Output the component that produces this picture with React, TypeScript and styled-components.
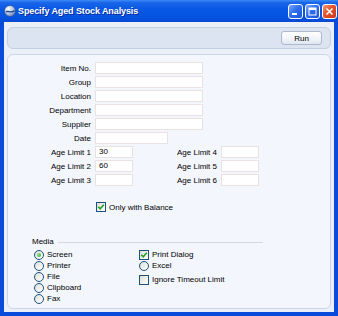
import styled, { createGlobalStyle } from "styled-components";

const GlobalStyle = createGlobalStyle`
  html, body {
    margin: 0;
    padding: 0;
    background: #ffffff;
  }
  body {
    font-family: "Liberation Sans", Arial, sans-serif;
  }
`;

const mainFields = ["Item No.", "Group", "Location", "Department", "Supplier"];

const ageRows = [
  { left: "Age Limit 1", leftValue: "30", right: "Age Limit 4" },
  { left: "Age Limit 2", leftValue: "60", right: "Age Limit 5" },
  { left: "Age Limit 3", leftValue: "", right: "Age Limit 6" },
];

export default function App() {
  return (
    <>
      <GlobalStyle />
      <StyledWindow>
        <StyledTitleBar>
          <AppIcon />
          <StyledTitle>Specify Aged Stock Analysis</StyledTitle>
          <StyledCaptionButtons>
            <StyledCaptionButton aria-label="Minimize">
              <svg width="9" height="9" viewBox="0 0 9 9">
                <rect x="1" y="6" width="5" height="2" fill="#fff" />
              </svg>
            </StyledCaptionButton>
            <StyledCaptionButton aria-label="Maximize">
              <svg width="9" height="9" viewBox="0 0 9 9">
                <rect x="1" y="1" width="7" height="7" fill="none" stroke="#fff" strokeWidth="1" />
                <rect x="1" y="1" width="7" height="2" fill="#fff" />
              </svg>
            </StyledCaptionButton>
            <StyledCaptionButton $close aria-label="Close">
              <svg width="9" height="9" viewBox="0 0 9 9">
                <path d="M1.5 1.5 L7.5 7.5 M7.5 1.5 L1.5 7.5" stroke="#fff" strokeWidth="1.6" />
              </svg>
            </StyledCaptionButton>
          </StyledCaptionButtons>
        </StyledTitleBar>

        <StyledClient>
          <StyledToolbar>
            <StyledRunButton>Run</StyledRunButton>
          </StyledToolbar>

          <StyledPanel>
            {mainFields.map((name) => (
              <StyledRow key={name}>
                <StyledLabel $w={83}>{name}</StyledLabel>
                <StyledField $w={108} />
              </StyledRow>
            ))}
            <StyledRow>
              <StyledLabel $w={83}>Date</StyledLabel>
              <StyledField $w={73} />
            </StyledRow>
            {ageRows.map((row) => (
              <StyledRow key={row.left}>
                <StyledLabel $w={83}>{row.left}</StyledLabel>
                <StyledField $w={38}>{row.leftValue}</StyledField>
                <StyledLabel $w={84}>{row.right}</StyledLabel>
                <StyledField $w={38} />
              </StyledRow>
            ))}

            <StyledBalanceRow>
              <CheckBox checked />
              <span>Only with Balance</span>
            </StyledBalanceRow>

            <StyledMedia>
              <StyledMediaHeader>
                <span>Media</span>
                <StyledRule />
              </StyledMediaHeader>
              <StyledOptions>
                <StyledOptionColumn $w={105}>
                  <StyledOption>
                    <Radio checked />
                    <span>Screen</span>
                  </StyledOption>
                  <StyledOption>
                    <Radio />
                    <span>Printer</span>
                  </StyledOption>
                  <StyledOption>
                    <Radio />
                    <span>File</span>
                  </StyledOption>
                  <StyledOption>
                    <Radio />
                    <span>Clipboard</span>
                  </StyledOption>
                  <StyledOption>
                    <Radio />
                    <span>Fax</span>
                  </StyledOption>
                </StyledOptionColumn>
                <StyledOptionColumn>
                  <StyledOption>
                    <CheckBox checked />
                    <span>Print Dialog</span>
                  </StyledOption>
                  <StyledOption>
                    <Radio />
                    <span>Excel</span>
                  </StyledOption>
                  <StyledOption $gapTop={3}>
                    <CheckBox />
                    <span>Ignore Timeout Limit</span>
                  </StyledOption>
                </StyledOptionColumn>
              </StyledOptions>
            </StyledMedia>
          </StyledPanel>
        </StyledClient>
      </StyledWindow>
    </>
  );
}

function AppIcon() {
  return (
    <svg width="12" height="12" viewBox="0 0 12 12" style={{ flex: "none" }}>
      <defs>
        <radialGradient id="globe" cx="0.35" cy="0.3" r="0.8">
          <stop offset="0" stopColor="#ffffff" />
          <stop offset="0.5" stopColor="#b9c9e6" />
          <stop offset="1" stopColor="#5a78b0" />
        </radialGradient>
      </defs>
      <circle cx="6" cy="6" r="5.5" fill="url(#globe)" stroke="#2b4a8a" strokeWidth="0.6" />
      <path d="M2 7 C4 5, 7 9, 10.5 5.5" stroke="#1d3f86" strokeWidth="1.3" fill="none" />
    </svg>
  );
}

function CheckBox({ checked }: { checked?: boolean }) {
  return (
    <StyledCheck>
      {checked && (
        <svg width="8" height="8" viewBox="0 0 8 8">
          <path d="M1.2 3.8 L3.2 5.8 L6.8 1.8" stroke="#21a121" strokeWidth="1.6" fill="none" />
        </svg>
      )}
    </StyledCheck>
  );
}

function Radio({ checked }: { checked?: boolean }) {
  return <StyledRadio>{checked && <StyledDot />}</StyledRadio>;
}

const StyledWindow = styled.div`
  width: 338px;
  height: 316px;
  display: flex;
  flex-direction: column;
  background: #0a4bdc;
  box-sizing: border-box;
  font-size: 8px;
  color: #000;
`;

const StyledTitleBar = styled.div`
  height: 22px;
  flex: none;
  display: flex;
  align-items: center;
  gap: 2px;
  padding: 0 1px 0 4px;
  background: linear-gradient(
    to bottom,
    #3d8bf7 0%,
    #1a66ea 12%,
    #0a58e4 40%,
    #0454e2 75%,
    #0648d4 100%
  );
`;

const StyledTitle = styled.span`
  flex: 1;
  color: #fff;
  font-weight: bold;
  font-size: 9px;
  letter-spacing: -0.1px;
  text-shadow: 1px 1px 0 #0b2c9a;
  white-space: nowrap;
`;

const StyledCaptionButtons = styled.div`
  display: flex;
  gap: 2px;
`;

const StyledCaptionButton = styled.div<{ $close?: boolean }>`
  width: 15px;
  height: 15px;
  box-sizing: border-box;
  border: 1px solid #fff;
  border-radius: 3px;
  display: flex;
  align-items: center;
  justify-content: center;
  background: ${(p) =>
    p.$close
      ? "linear-gradient(135deg, #f29a78 0%, #e2532a 45%, #c8381a 100%)"
      : "linear-gradient(135deg, #7ba8f8 0%, #2f6ef0 45%, #1c55d8 100%)"};
`;

const StyledClient = styled.div`
  flex: 1;
  margin: 0 4px 4px 4px;
  background: #ebeff8;
  display: flex;
  flex-direction: column;
  gap: 5px;
  padding: 5px 3px 3px 3px;
  min-height: 0;
`;

const StyledToolbar = styled.div`
  height: 22px;
  flex: none;
  box-sizing: border-box;
  border: 1px solid #c2cee2;
  border-radius: 6px;
  background: #dce4f2;
  display: flex;
  justify-content: flex-end;
  align-items: center;
  padding-right: 8px;
`;

const StyledRunButton = styled.div`
  width: 41px;
  height: 14px;
  box-sizing: border-box;
  border: 1px solid #aeb9cd;
  border-radius: 3px;
  background: linear-gradient(to bottom, #ffffff 0%, #f0f3f9 60%, #dfe5f0 100%);
  display: flex;
  align-items: center;
  justify-content: center;
  font-size: 8px;
`;

const StyledPanel = styled.div`
  flex: 1;
  box-sizing: border-box;
  border: 1px solid #cbd6e8;
  border-radius: 6px;
  background: #f3f6fc;
  padding-top: 6px;
  display: flex;
  flex-direction: column;
`;

const StyledRow = styled.div`
  display: flex;
  align-items: center;
  height: 14px;
`;

const StyledLabel = styled.span<{ $w: number }>`
  width: ${(p) => p.$w}px;
  flex: none;
  margin-right: 4px;
  text-align: right;
  white-space: nowrap;
`;

const StyledField = styled.div<{ $w: number }>`
  width: ${(p) => p.$w}px;
  height: 12px;
  flex: none;
  box-sizing: border-box;
  border: 1px solid #eae2e2;
  background: #fff;
  padding-left: 3px;
  line-height: 10px;
`;

const StyledBalanceRow = styled.div`
  display: flex;
  align-items: center;
  gap: 3px;
  margin-top: 14px;
  padding-left: 88px;
  height: 12px;
`;

const StyledMedia = styled.div`
  margin-top: 23px;
  padding: 0 67px 0 24px;
`;

const StyledMediaHeader = styled.div`
  display: flex;
  align-items: center;
  gap: 4px;
  height: 10px;
`;

const StyledRule = styled.div`
  flex: 1;
  height: 1px;
  margin-top: 3px;
  background: #d3d8e2;
`;

const StyledOptions = styled.div`
  display: flex;
  margin-top: 3px;
  padding-left: 2px;
`;

const StyledOptionColumn = styled.div<{ $w?: number }>`
  display: flex;
  flex-direction: column;
  width: ${(p) => (p.$w ? `${p.$w}px` : "auto")};
`;

const StyledOption = styled.div<{ $gapTop?: number }>`
  display: flex;
  align-items: center;
  gap: 3px;
  height: 11px;
  margin-top: ${(p) => p.$gapTop ?? 0}px;
  white-space: nowrap;
`;

const StyledCheck = styled.div`
  width: 10px;
  height: 10px;
  flex: none;
  box-sizing: border-box;
  border: 1px solid #1c5180;
  background: linear-gradient(135deg, #dcdcd7 0%, #f6f6f3 70%, #ffffff 100%);
  display: flex;
  align-items: center;
  justify-content: center;
`;

const StyledRadio = styled.div`
  width: 10px;
  height: 10px;
  flex: none;
  box-sizing: border-box;
  border: 1px solid #1c5180;
  border-radius: 50%;
  background: linear-gradient(135deg, #dcdcd7 0%, #f6f6f3 70%, #ffffff 100%);
  display: flex;
  align-items: center;
  justify-content: center;
`;

const StyledDot = styled.div`
  width: 4px;
  height: 4px;
  border-radius: 50%;
  background: radial-gradient(circle at 35% 35%, #8ee88e, #21a121);
`;
